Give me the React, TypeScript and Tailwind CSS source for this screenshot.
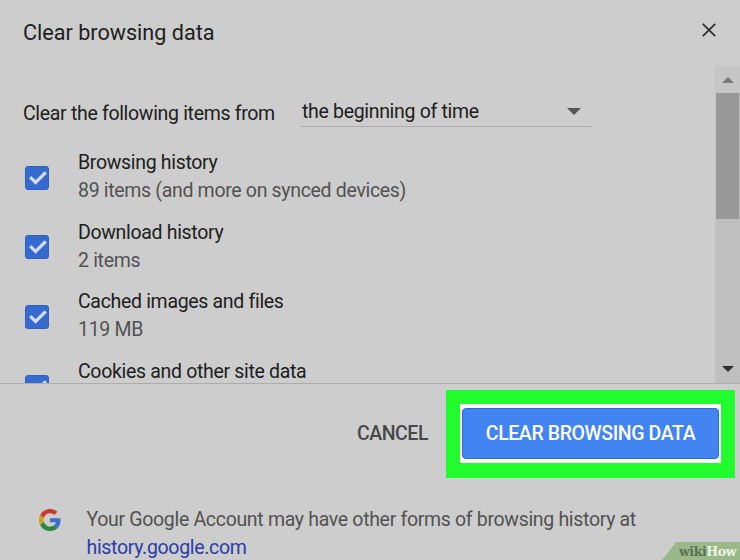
import type { ReactNode } from "react";

type ClearItem = {
  label: string;
  detail: string;
};

const items: ClearItem[] = [
  { label: "Browsing history", detail: "89 items (and more on synced devices)" },
  { label: "Download history", detail: "2 items" },
  { label: "Cached images and files", detail: "119 MB" },
  { label: "Cookies and other site data", detail: "" },
];

function CheckedBox() {
  return (
    <span
      role="checkbox"
      aria-checked="true"
      className="mt-[16.6px] flex h-6 w-6 shrink-0 items-center justify-center rounded-[3px] border border-[#2f62bd] bg-[#356ace]"
    >
      <svg viewBox="0 0 24 24" className="h-6 w-6 shrink-0" fill="none" stroke="#d3dcee" strokeWidth="3.2">
        <path d="M5.2 11.2 L10.6 16.4 L20.8 6.4" />
      </svg>
    </span>
  );
}

function ClearRow({ item }: { item: ClearItem }) {
  return (
    <li className="flex h-[69.6px] items-start pl-[25px]">
      <CheckedBox />
      <div className="ml-[29px] text-[19.5px] leading-7 tracking-[-0.32px] whitespace-nowrap">
        <p>{item.label}</p>
        <p className="text-[#525252]">{item.detail}</p>
      </div>
    </li>
  );
}

function GoogleLogo() {
  return (
    <svg viewBox="0 0 48 48" className="h-[22px] w-[22px] shrink-0" aria-label="Google">
      <path fill="#c93a31" d="M24 9.5c3.54 0 6.71 1.22 9.21 3.6l6.85-6.85C35.9 2.38 30.47 0 24 0 14.62 0 6.51 5.38 2.56 13.22l7.98 6.19C12.43 13.72 17.74 9.5 24 9.5z" />
      <path fill="#3c6fcb" d="M46.98 24.55c0-1.57-.15-3.09-.38-4.55H24v9.02h12.94c-.58 2.96-2.26 5.48-4.78 7.18l7.73 6c4.51-4.18 7.09-10.36 7.09-17.65z" />
      <path fill="#cca01c" d="M10.53 28.59c-.48-1.45-.76-2.99-.76-4.59s.27-3.14.76-4.59l-7.98-6.19C.92 16.46 0 20.12 0 24c0 3.88.92 7.54 2.56 10.78l7.97-6.19z" />
      <path fill="#2b8740" d="M24 48c6.48 0 11.93-2.13 15.89-5.81l-7.73-6c-2.15 1.45-4.92 2.3-8.16 2.3-6.26 0-11.57-4.22-13.47-9.91l-7.98 6.19C6.51 42.62 14.62 48 24 48z" />
    </svg>
  );
}

function Arrow({ up, className }: { up?: boolean; className: string }) {
  return (
    <svg viewBox="0 0 12 6" preserveAspectRatio="none" className={className} fill="currentColor">
      <path d={up ? "M0 6 L6 0 L12 6Z" : "M0 0 L12 0 L6 6Z"} />
    </svg>
  );
}

function Scrollbar() {
  return (
    <div className="flex w-[25px] shrink-0 flex-col items-center border-l border-[#c3c3c3] bg-[#bfbfbf]">
      <div className="flex h-[27px] w-full shrink-0 justify-center bg-[#c6c6c6] pt-[11px]">
        <Arrow up className="h-[6px] w-3 text-[#7b7b7b]" />
      </div>
      <div className="mr-px h-[126px] w-[23px] shrink-0 bg-[#999]" />
      <Arrow className="mt-auto mb-[11px] h-[6px] w-3 text-[#303030]" />
    </div>
  );
}

function Highlight({ children }: { children: ReactNode }) {
  return (
    <div className="h-[88px] w-[289px] shrink-0 bg-[#22fb2d] p-[14px]">
      <div className="h-[59px] w-[261px] bg-white px-0.5 py-1">{children}</div>
    </div>
  );
}

export default function App() {
  return (
    <div className="relative flex h-[560px] w-[740px] flex-col overflow-hidden bg-[#cdcdcd] font-[Roboto,sans-serif] text-[#202020]">
      <header className="flex h-[66px] shrink-0 items-start justify-between pr-[23px] pl-[23px]">
        <h1 className="mt-[19px] text-[21.6px] leading-7">Clear browsing data</h1>
        <button type="button" aria-label="Close" className="mt-[23px] mr-px">
          <svg viewBox="0 0 14 14" className="h-[14px] w-[14px]" stroke="#2c2c2c" strokeWidth="1.7">
            <path d="M.8 .8 L13.2 13.2 M13.2 .8 L.8 13.2" />
          </svg>
        </button>
      </header>

      <main className="flex h-[317px] shrink-0 overflow-hidden">
        <div className="min-w-0 flex-1">
          <div className="flex h-[83.3px] items-start pl-[23px]">
            <span className="mt-[34px] w-[278px] shrink-0 text-[19.5px] leading-7 tracking-[-0.32px] whitespace-nowrap">
              Clear the following items from
            </span>
            <div className="mt-[29px] flex h-[32px] w-[290px] justify-between border-b border-[#acacac] pr-2.5">
              <span className="pt-px pl-px text-[19.5px] leading-[32px] tracking-[-0.32px] whitespace-nowrap">
                the beginning of time
              </span>
              <Arrow className="mt-[13px] h-[7px] w-[14px] text-[#555]" />
            </div>
          </div>
          <ul>
            {items.map((item) => (
              <ClearRow key={item.label} item={item} />
            ))}
          </ul>
        </div>
        <Scrollbar />
      </main>

      <div className="flex h-[107px] shrink-0 items-start justify-end border-t border-[#acacac] pt-[6px] pr-[5px]">
        <button
          type="button"
          className="mt-[30px] mr-[18px] text-[19.5px] leading-7 font-medium tracking-[-0.45px] text-[#484848]"
        >
          CANCEL
        </button>
        <Highlight>
          <button
            type="button"
            className="flex h-[51px] w-[257px] items-center justify-center rounded-[4px] border border-[#3569cb] bg-[#4384f3] text-[19.5px] font-medium tracking-[-0.4px] whitespace-nowrap text-white"
          >
            CLEAR BROWSING DATA
          </button>
        </Highlight>
      </div>

      <footer className="flex flex-1 items-start pl-[38.5px]">
        <div className="mt-[19px]">
          <GoogleLogo />
        </div>
        <p className="mt-4 ml-[26px] text-[19.5px] leading-7 tracking-[-0.32px] whitespace-nowrap text-[#525252]">
          <span>Your Google Account may have other forms of browsing history at</span>
          <br />
          <a className="text-[#2a3da8]">history.google.com</a>
        </p>
      </footer>

      <div className="absolute right-0 bottom-0 flex h-[18px] w-[78px] justify-end bg-[#9bb988] pr-1 font-['DejaVu_Serif',serif] text-[12.5px] leading-[19px] font-bold tracking-[-0.4px] [clip-path:polygon(14px_0,100%_0,100%_100%,0_100%)]">
        <span className="text-[#5d6e54]">wiki</span>
        <span className="text-[#eef3ea]">How</span>
      </div>
    </div>
  );
}
